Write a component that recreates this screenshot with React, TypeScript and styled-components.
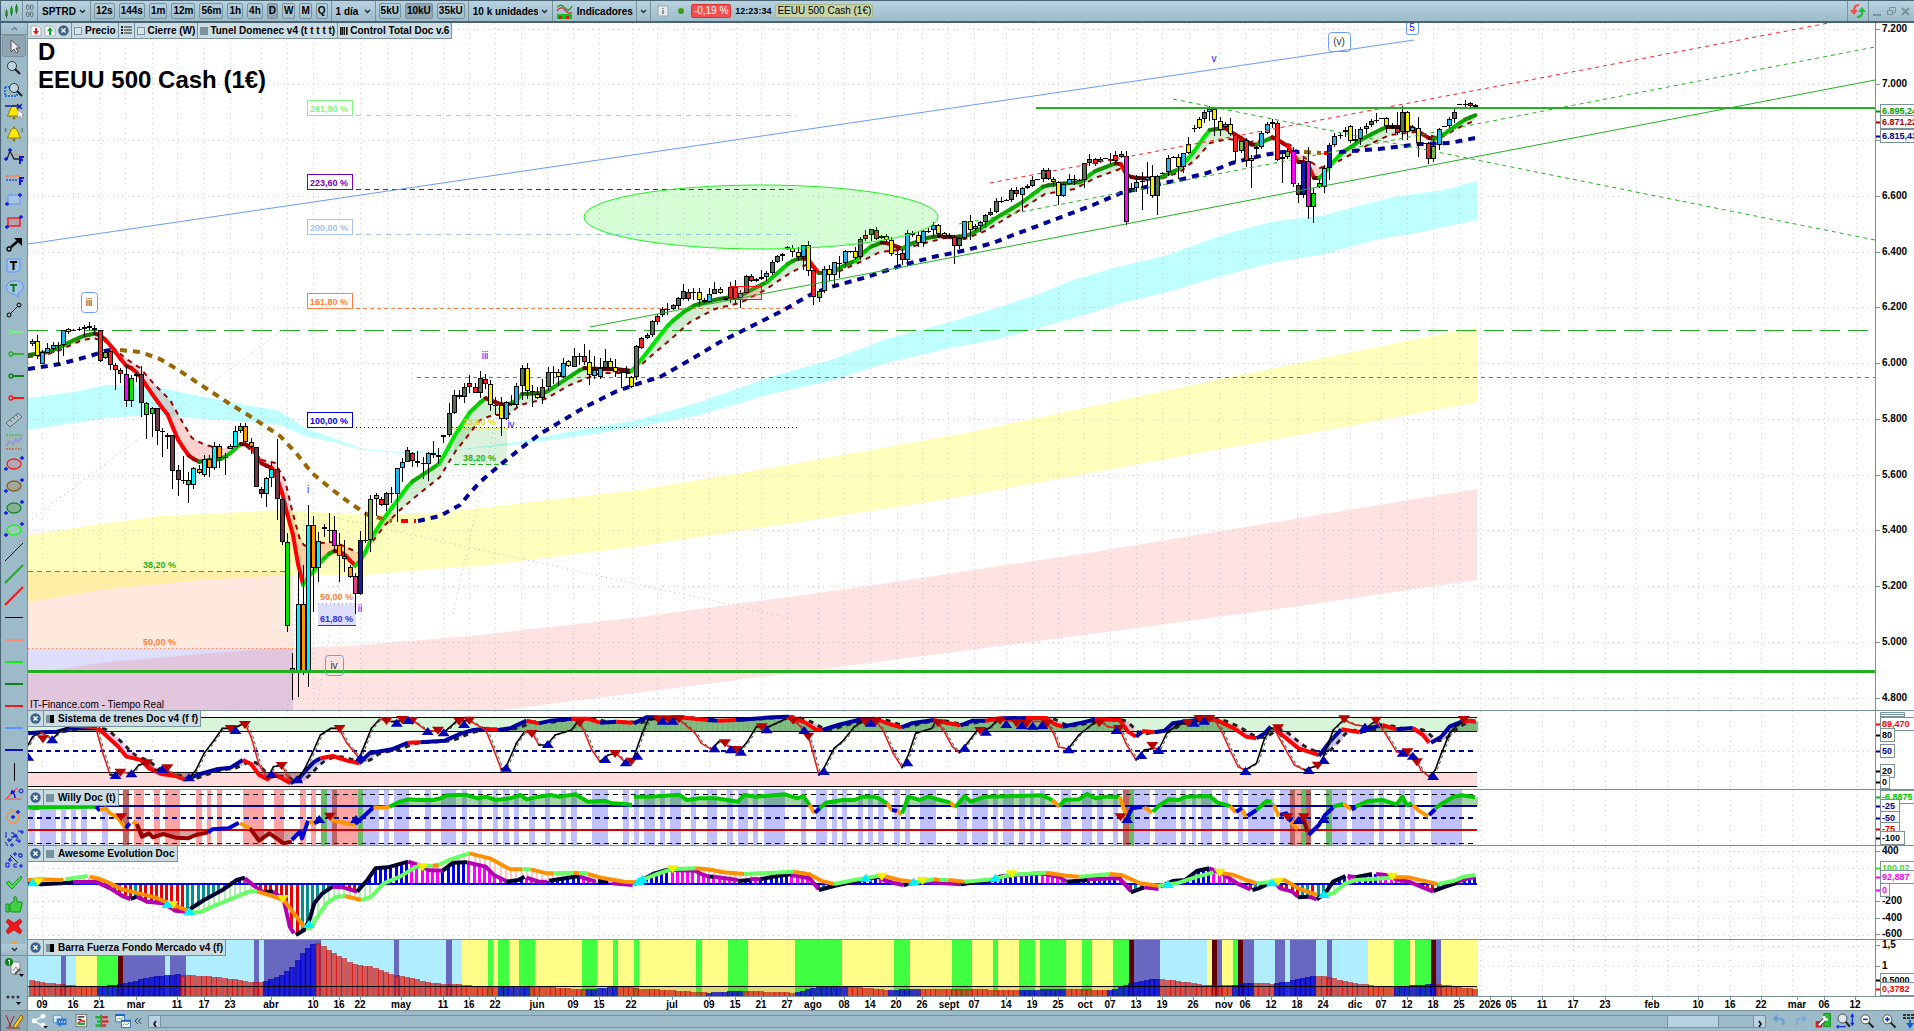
import React from 'react';
import styled, { createGlobalStyle } from 'styled-components';

/* ---------- palette ---------- */
const C = {
  edge: '#4a6373',
  line: '#7a929c',
  bar: '#9cbac8',
  barLight: '#b8d2e0',
  tab: '#cbdce3',
  up: '#22b022',
};

const FONT = '"Liberation Sans", Arial, sans-serif';

const GlobalStyle = createGlobalStyle`
  * { box-sizing: border-box; }
  body { margin: 0; background: #fff; font-family: ${FONT}; font-size: 10px; color: #000; overflow: hidden; }
  button, select, input { font-family: inherit; color: inherit; margin: 0; }
`;

/* ---------- shell ---------- */
const Page = styled.div`
  display: flex;
  flex-direction: column;
  min-height: 100vh;
`;
const TopBar = styled.header`
  display: flex;
  align-items: stretch;
  height: 23px;
  background: linear-gradient(${C.barLight}, #9dbbc9);
  border-top: 1px solid ${C.edge};
  border-bottom: 2px solid ${C.edge};
  border-left: 1px solid ${C.edge};
  font-weight: 700;
`;
const Group = styled.div<{ $pad?: number; $gap?: number; $open?: boolean }>`
  display: flex;
  align-items: center;
  gap: ${(p) => p.$gap ?? 4}px;
  padding: 0 ${(p) => p.$pad ?? 4}px;
  border-right: ${(p) => (p.$open ? '0' : `1px solid ${C.line}`)};
  white-space: nowrap;
`;
const Spacer = styled.div`
  flex: 1;
`;
const Frame = styled.button<{ $on?: boolean }>`
  height: 16px;
  padding: 0 1px;
  border: 1px solid ${C.line};
  border-radius: 2px;
  background: ${(p) => (p.$on ? '#8fa6b2' : 'transparent')};
  font-size: 10px;
  font-weight: 700;
  line-height: 14px;
`;
const Plain = styled.button`
  display: inline-flex;
  align-items: center;
  justify-content: center;
  gap: 4px;
  padding: 0;
  border: 0;
  background: none;
  font-size: 10px;
  font-weight: 700;
`;
const Picker = styled.select<{ $w: number }>`
  width: ${(p) => p.$w}px;
  padding: 0;
  border: 0;
  appearance: none;
  background: none;
  font-size: 10px;
  font-weight: 700;
`;
const Change = styled.span`
  padding: 0 2px;
  border: 1px solid #e03030;
  border-radius: 2px;
  background: #f25050;
  color: #fff;
  font-weight: 400;
  line-height: 12px;
`;
const Clock = styled.span`
  font-size: 9px;
`;
const Market = styled.span`
  padding: 0 1px;
  border: 1px solid #a9b884;
  border-radius: 3px;
  background: #c6d4a8;
  font-weight: 400;
  line-height: 12px;
`;

const Body = styled.div`
  display: flex;
  flex: 1;
`;
const Side = styled.nav`
  display: flex;
  flex-direction: column;
  width: 28px;
  background: ${C.bar};
  border-left: 1px solid ${C.edge};
  border-right: 1px solid ${C.line};
`;
const Fold = styled.button`
  display: flex;
  align-items: center;
  justify-content: center;
  height: 12px;
  padding: 0;
  border: 0;
  border-bottom: 1px solid ${C.line};
  background: linear-gradient(#aec9d6, ${C.bar});
`;
const Tool = styled.button<{ $on?: boolean }>`
  display: flex;
  align-items: center;
  justify-content: center;
  height: 22px;
  margin: 0 1px;
  padding: 0;
  border: 1px solid ${(p) => (p.$on ? C.line : 'transparent')};
  border-radius: 3px;
  background: ${(p) => (p.$on ? '#8fa6b2' : 'none')};
`;
const Peek = styled.div`
  height: 7px;
  overflow: hidden;
  text-align: center;
`;
const Charts = styled.main`
  display: flex;
  flex-direction: column;
  flex: 1;
  min-width: 0;
`;
const PanelRow = styled.section`
  position: relative;
  display: flex;
  border-bottom: 1px solid ${C.line};
`;
const Plot = styled.svg`
  display: block;
  flex: 1;
  min-width: 0;
  overflow: hidden;
`;
const Axis = styled.svg`
  display: block;
  flex: none;
  width: 39px;
  border-left: 1px solid ${C.line};
  background: #fff;
`;
const Tabs = styled.div`
  position: absolute;
  top: 0;
  left: 0;
  display: flex;
  height: 16px;
  border-right: 1px solid ${C.line};
  border-bottom: 1px solid ${C.line};
  background: ${C.tab};
  font-weight: 700;
`;
const Tab = styled.div<{ $tight?: boolean }>`
  display: flex;
  align-items: center;
  gap: ${(p) => (p.$tight ? 2 : 4)}px;
  padding: 0 2px;
  white-space: nowrap;
  & + & { border-left: 1px solid ${C.line}; }
`;
const TickLabel = styled.label`
  display: flex;
  align-items: center;
  gap: 3px;
`;
const Tick = styled.input`
  width: 8px;
  height: 8px;
  border: 1px solid ${C.line};
  appearance: none;
  background: #dbe6ea;
`;
const Heading = styled.h1`
  position: absolute;
  top: 15px;
  left: 10px;
  margin: 0;
  font-size: 24px;
  line-height: 28px;
  font-weight: 700;
`;
const Bottom = styled.footer`
  display: flex;
  align-items: stretch;
  height: 21px;
  background: ${C.bar};
  border-top: 1px solid ${C.line};
  border-left: 1px solid ${C.edge};
`;
const Shelf = styled.div<{ $dark?: boolean }>`
  display: flex;
  align-items: center;
  justify-content: space-around;
  width: ${(p) => (p.$dark ? 27 : 106)}px;
  background: ${(p) => (p.$dark ? '#8fa6b2' : 'none')};
  border-right: ${(p) => (p.$dark ? `1px solid ${C.line}` : '0')};
`;
const Scroll = styled.div`
  display: flex;
  flex: 1;
  align-self: center;
  height: 13px;
  margin: 0 4px 0 6px;
  border: 1px solid ${C.line};
`;
const Step = styled.button`
  width: 11px;
  padding: 0;
  border: 0;
  background: ${C.barLight};
  outline: 1px solid ${C.line};
`;
const Track = styled.div`
  display: flex;
  flex: 1;
  justify-content: flex-end;
  padding-right: 35px;
`;
const Thumb = styled.div`
  width: 52px;
  background: ${C.barLight};
  border: solid ${C.line};
  border-width: 0 1px;
`;
const ZoomShelf = styled.div`
  display: flex;
  align-items: center;
  gap: 4px;
`;

/* ---------- geometry helpers ---------- */
type P = [number, number];
const parse = (s: string): P[] =>
  s.trim().split(/\s+/).map((q) => q.split(',').map(Number) as P);
const join = (p: P[]) => p.map((q) => q.join(',')).join(' ');
const at = (p: P[], x: number) => {
  if (x <= p[0][0]) return p[0][1];
  for (let i = 1; i < p.length; i++) {
    if (x <= p[i][0]) {
      const [x0, y0] = p[i - 1];
      const [x1, y1] = p[i];
      return x1 === x0 ? y1 : y0 + ((y1 - y0) * (x - x0)) / (x1 - x0);
    }
  }
  return p[p.length - 1][1];
};
/* Indicator traces come in three time blocks, held at plotting resolution. */
const BLOCKS = [0, 634, 1274];
const bx = (b: number, x: number) => BLOCKS[b] + x / 2.45;
const by = (y: number) => 700 + y / 3;
const scale = (b: number, s: string): P[] => parse(s).map(([x, y]) => [bx(b, x), by(y)]);

const PITCH = 5.21;
const barX = (i: number) => 32.3 + i * PITCH;
const LAST = 277;
const END = 1477;

/* ---------- candles: high top bottom low colour, in thirds of a pixel ---------- */
const LEG_A = `266 273 281 289 b|256 274 319 326 y|300 307 341 341 b|280 294 308 310 b|277 286 296 308 b|275 285 285 347 x|241 241 286 318 b|234 238 246 252 y|238 240 240 242 x|232 237 237 242 x|226 230 234 262 b|216 229 235 240 b|226 235 240 256 y|241 241 332 335 r|302 305 323 327 v|300 303 346 361 r|340 345 361 420 r|355 361 373 400 r|345 373 452 470 p|375 385 452 470 l|365 372 378 395 r|348 373 460 500 m|455 459 494 568 l|470 475 493 562 l|475 475 544 585 m|535 542 542 622 x|550 556 562 598 m|556 556 662 718 m|645 660 691 738 m|618 690 690 702 x|665 690 706 758 l|650 655 706 718 c|645 658 670 672 o|615 627 674 680 c|615 628 655 680 o|576 589 655 660 c|582 589 623 655 o|608 620 620 676 x|582 589 598 598 c|528 544 590 590 c|520 529 544 548 l|518 529 577 580 o|565 577 591 612 o|592 592 712 712 m|712 717 733 745 m|680 685 733 770 c|640 658 685 710 c|568 657 748 810 m|745 748 875 885 m|850 875 1127 1145 l|1210 1255 1263 1350 l|965 1063 1263 1340 c|945 1063 1263 1275 o|765 826 1263 1310 c|797 826 953 1085 o|845 874 953 995 c|822 832 838 862 n|790 840 840 880 x|797 841 887 900 p|848 886 917 995 o|870 917 928 965 o|945 952 980 985 o|968 979 1031 1093 k|843 871 1031 1035 n|785 871 871 880 x|735 748 871 905 v|728 736 748 798 v|740 748 766 768 r|725 728 766 782 g|710 729 729 760 x|655 655 733 815 b|625 637 655 695 b|592 601 637 637 g|605 610 634 650 r|602 634 640 650 r|620 640 640 688 x|605 610 643 694 b|574 610 616 625 r|595 616 622 642 r|556 556 562 580 g|460 490 556 562 g|420 436 490 492 g|420 436 442 448 r|400 412 442 458 g|375 400 412 430 r|400 410 430 430 r|364 385 430 445 g|373 388 402 418 r|390 402 466 482 y|442 466 466 495 x|440 466 508 557 y|454 457 506 510 b|436 458 466 468 y|400 409 466 470 b|345 355 409 450 g|340 355 424 448 y|405 423 423 472 x|410 433 445 447 y|388 412 445 462 g|352 367 412 422 g|348 366 366 402 x|358 367 382 408 y|325 340 382 384 b|330 334 349 352 y|295 317 350 350 g|310 317 317 345 x|282 319 337 345 r|300 337 376 404 y|318 361 377 386 b|325 355 380 386 b|298 332 355 360 g|325 332 353 362 y|328 352 367 380 y|355 366 366 415 x|347 365 365 385 x|378 380 412 415 y|284 289 382 390 g|262 265 293 298 r|248 256 265 268 g|210 214 256 262 g|192 199 215 225 r|172 178 196 200 g|160 176 176 195 x|162 166 176 180 g|140 145 167 178 g|102 124 146 150 g|118 125 148 152 r|115 127 127 150 x|115 127 150 170 y|145 149 157 160 y|115 133 157 160 b|96 118 133 133 g|110 118 130 132 y|140 145 151 154 g|95 110 145 160 g|90 110 147 158 r|120 130 143 175 b|76 79 130 130 g|72 79 94 97 r|84 88 94 97 g|60 82 88 90 r|64 70 82 92 b|30 37 70 75 g|15 19 37 40 g|8 13 19 34 g`;
const LEG_B = `287 290 295 300 g|285 293 307 320 y|290 307 322 332 y|286 286 322 360 b|274 286 364 377 y|360 361 442 465 r|418 422 445 457 v|348 358 422 430 b|345 358 376 393 y|335 337 376 410 b|318 338 338 385 x|300 304 340 355 b|302 304 304 308 x|290 304 323 330 y|262 268 322 330 g|240 256 268 272 r|236 238 256 272 g|232 239 268 270 r|254 258 265 268 g|252 257 270 275 y|260 271 313 318 y|298 311 311 346 x|298 310 331 345 r|240 250 331 348 b|242 248 254 262 y|245 256 280 290 y|240 244 280 290 b|233 243 243 250 x|216 226 240 265 b|223 226 253 262 y|245 250 258 262 y|248 258 258 265 x|255 260 289 342 r|262 265 289 298 g|212 214 265 268 b|195 214 241 270 y|222 229 237 242 b|212 217 229 245 b|192 196 217 235 g|175 187 196 198 r|145 152 187 188 g|140 152 152 160 x|148 150 150 152 x|113 119 149 155 g|110 119 133 140 r`;
const LEG_C = `290 295 314 362 b|282 287 293 298 y|258 269 288 292 g|266 268 268 270 x|235 241 267 275 g|235 241 267 270 r|260 266 276 290 y|274 277 317 344 y|278 281 317 320 b|252 266 281 285 b|255 268 268 285 x|267 269 269 271 x|218 220 271 295 g|193 208 220 228 g|204 208 223 228 r|200 206 217 220 g|203 205 205 207 x|190 206 214 222 o|182 195 214 222 r|182 193 200 203 r|184 199 395 404 p|280 294 294 305 x|255 275 295 305 b|245 274 274 360 x|215 261 270 312 b|225 259 317 325 y|255 259 317 375 g|246 248 248 250 x|195 203 247 258 b|199 201 201 203 x|192 200 230 268 y|188 190 230 248 b|142 161 190 192 y|104 114 114 125 x|82 88 115 118 y|60 65 88 98 g|47 56 65 94 b|50 56 90 138 y|80 92 121 138 y|95 103 110 118 b|85 103 133 138 y|128 136 185 216 r|145 152 184 190 v|145 150 214 232 r|196 203 214 293 v|168 172 178 202 v|122 128 172 178 b|97 103 128 132 b|88 97 103 115 b|92 98 209 213 r|190 200 207 278 v|178 182 200 207 v|170 182 283 290 p|280 284 314 340 m|205 212 314 325 n|170 212 350 388 p|293 308 352 398 l|268 278 290 295 l|226 233 292 310 c|160 166 233 270 n|130 139 166 170 b|128 136 136 148 x|110 119 124 140 b|105 109 154 158 y|118 146 154 160 b|110 116 146 165 b|98 107 116 132 b|88 92 106 110 g|70 91 91 100 x|83 85 85 87 x|80 83 107 130 y|100 108 115 118 y|65 115 128 135 r|48 67 127 150 g|62 67 127 150 y|105 112 122 125 b|80 113 160 200 y|158 160 160 162 x|155 160 206 222 r|148 167 206 215 v|115 118 166 180 b|107 109 109 111 x|82 88 109 115 b|58 67 88 100 g|41 43 43 45 x|30 43 43 50 x|37 40 47 50 r|43 46 50 57 y`;
const FILL: Record<string, string> = {
  b: '#22b8ee', y: '#f4ee00', r: '#ff2222', g: '#536f55', m: '#6c3a46', l: '#00e800',
  c: '#00f0ff', o: '#ff9800', p: '#ff00ff', n: '#1a1aa8', v: '#7cba48', k: '#dc4490', x: '#000',
};
const candles = [
  ...LEG_A.split('|').map((s) => [250, s] as const),
  ...LEG_B.split('|').map((s) => [150, s] as const),
  ...LEG_C.split('|').map((s) => [90, s] as const),
].map(([base, s], i) => {
  const [h, t, b, l, c] = s.split(' ');
  const y = (v: string) => Math.round(base + Number(v) / 3);
  return { x: Math.floor(barX(i)), h: y(h), t: y(t), b: y(b), l: y(l), c };
});

const FAST = parse(`28,355 45,353 58,348 70,342 83,336 97,333 107,341 117,354 125,365 133,369 140,376 150,391 160,405 168,415 177,438 188,455 198,462 210,460 222,459 232,452 240,444 250,445 262,464 272,468 280,484 287,513 293,535 302,587 308,577 315,570 322,560 330,553 337,550 345,555 355,566 363,558 372,537 380,524 390,510 400,497 410,483 430,470 440,463 455,435 470,412 485,398 500,404 508,405 516,401 522,394 545,393 560,383 583,368 600,369 615,369 632,371 645,355 658,338 670,323 685,311 695,305 718,299 740,296 755,288 767,282 790,262 800,258 808,259 813,266 819,273 833,272 845,265 857,260 863,253 870,247 883,242 893,245 902,249 908,245 927,238 937,236 953,237 967,236 980,229 996,218 1021,203 1044,186 1057,184 1082,182 1093,172 1111,165 1120,162 1127,176 1136,178 1157,179 1179,169 1193,153 1209,130 1225,128 1236,135 1254,146 1273,137 1289,147 1298,162 1307,162 1314,178 1321,178 1332,163 1343,152 1364,138 1386,127 1411,127 1432,140 1443,135 1464,120 1476,115`);
const SLOW = parse(`28,357 45,355 60,350 80,341 93,338 107,342 125,358 140,368 155,385 170,400 180,418 192,438 203,444 213,447 222,449 235,446 245,445 262,460 275,463 285,480 292,510 300,540 304,545 310,548 320,543 335,542 350,549 360,553 370,545 385,525 400,510 420,493 440,477 455,452 470,433 480,420 493,415 508,415 520,405 545,399 570,385 600,373 632,373 650,357 670,340 690,322 715,309 740,303 765,290 790,273 808,264 820,273 833,274 860,262 880,252 900,250 925,243 945,238 965,239 985,231 1000,222 1020,210 1045,194 1075,189 1095,178 1120,169 1130,177 1155,181 1180,172 1195,160 1210,143 1228,139 1250,142 1273,139 1290,145 1305,158 1320,168 1335,163 1350,155 1370,144 1390,135 1415,132 1440,138 1460,127 1476,120`);
const LONG: [string, string][] = [
  ['#000099', '28,369 60,364 90,356 105,351 116,349'],
  ['#996600', '120,350 140,352 160,359 180,371 207,389 230,404 245,413 262,424 280,436 296,453 312,473 330,488 350,503 368,515 392,521'],
  ['#ff0000', '401,521 416,521'],
  ['#000099', '418,521 440,516 460,505 470,493 480,482 500,465 520,449 540,434 560,422 585,407 615,392 640,383 660,377 690,360 720,342 750,327 780,312 810,295 827,288 867,277 903,265 933,257 967,250 993,243 1013,235 1043,224 1093,205 1121,193 1150,186 1179,180 1207,173 1232,163 1264,155 1282,152 1302,152'],
  ['#996600', '1304,152 1321,153'],
  ['#ff0000', '1324,153 1334,153'],
  ['#000099', '1339,152 1379,149 1421,144 1450,143 1475,138'],
];
const band = (up: string, lo: string) => up + ' ' + lo.trim().split(' ').reverse().join(' ');
const CYAN = band(
  '28,398 73,392 107,385 150,386 190,394 225,401 280,411 305,428 333,438 363,449 400,452 440,451 470,448 520,441 587,428 637,420 700,402 770,377 830,360 890,338 950,322 996,308 1036,295 1073,280 1121,266 1164,256 1200,243 1225,234 1271,222 1325,215 1350,208 1393,197 1443,190 1477,181',
  '28,430 73,423 107,418 150,415 190,418 225,420 280,425 305,436 333,442 363,450 400,453 440,453 470,449 520,444 587,435 637,427 700,415 770,394 830,381 890,362 950,348 998,339 1036,329 1091,313 1121,303 1164,293 1218,277 1271,263 1325,254 1375,240 1421,232 1477,220');
const YELLOW = band(
  '28,535 100,524 160,516 220,513 280,510 333,513 367,515 433,513 480,508 637,490 770,468 970,432 1221,379 1411,340 1477,327',
  '28,602 100,590 200,580 290,575 367,575 433,569 480,566 640,546 883,509 970,495 1221,449 1350,426 1477,402');
const PINK = band(
  '28,674 100,663 200,654 280,648 350,646 480,635 640,617 854,588 1100,551 1300,518 1477,489',
  '28,720 440,718 502,710 583,700 854,665 1100,633 1300,606 1477,580');

const GRID_X = [42, 73, 100, 125, 152, 177, 204, 230, 261, 287, 313, 339, 360, 387, 412, 443, 469, 495, 521, 547, 573, 599, 632, 657, 683, 709, 736, 761, 787, 818, 844, 870, 897, 922, 948, 974, 1006, 1032, 1058, 1084, 1110, 1136, 1162, 1189, 1219, 1245, 1271, 1297, 1324, 1350, 1381, 1407, 1433, 1459, 1480, 1511, 1542, 1573, 1605, 1636, 1667, 1698, 1730, 1761, 1792, 1824, 1856];

const Grid = ({ top, h, ys }: { top: number; h: number; ys: number[] }) => (
  <g stroke="#d4d4d4" strokeDasharray="1 4" shapeRendering="crispEdges">
    {GRID_X.map((x) => <line key={x} x1={x} x2={x} y1={top} y2={top + h} />)}
    {ys.map((y) => <line key={y} x1={28} x2={1875} y1={y} y2={y} />)}
  </g>
);

const maColour = (slope: number) => {
  const t = Math.min(1, Math.abs(slope) / 1.1);
  return slope < 0
    ? `rgb(${Math.round(30 * (1 - t))},${Math.round(100 + 130 * t)},0)`
    : `rgb(${Math.round(85 + 170 * t)},0,0)`;
};

const MovingAverages = () => {
  const quads: React.ReactNode[] = [];
  const line: React.ReactNode[] = [];
  for (let i = 0; i <= LAST; i++) {
    const a = i === 0 ? 28 : barX(i - 1);
    const b = barX(i);
    const fa = at(FAST, a), fb = at(FAST, b), sa = at(SLOW, a), sb = at(SLOW, b);
    quads.push(
      <polygon key={i} points={`${a},${fa} ${b},${fb} ${b},${sb} ${a},${sa}`}
        fill={fa + fb < sa + sb ? 'rgba(30,160,30,.2)' : 'rgba(255,50,50,.22)'} />,
    );
    line.push(<line key={i} x1={a} y1={fa} x2={b} y2={fb} stroke={maColour((fb - fa) / (b - a))} />);
  }
  return (
    <g>
      {quads}
      <polyline points={join(SLOW)} fill="none" stroke="#990000" strokeWidth={2} strokeDasharray="5 5" />
      <g strokeWidth={4} strokeLinecap="round">{line}</g>
      {LONG.map(([c, p], i) => (
        <polyline key={i} points={p} fill="none" stroke={c} strokeWidth={4} strokeDasharray="7 6" />
      ))}
    </g>
  );
};

const FibLabel = ({ y, text, color, dash }: { y: number; text: string; color: string; dash: string }) => (
  <g>
    <rect x={307.5} y={y - 15.5} width={45} height={15} fill="#fff" stroke={color} />
    <text x={310} y={y - 4} fill={color} fontSize={9} fontWeight={700}>{text}</text>
    <line x1={356} x2={797} y1={y - 0.5} y2={y - 0.5} stroke={color} strokeDasharray={dash} />
  </g>
);

const PriceChart = () => (
  <Plot height={687} fontFamily={FONT} fontSize={10}>
    <g transform="translate(-28,-23)">
      <Grid top={23} h={688} ys={[29, 84, 140, 196, 252, 307, 363, 419, 475, 530, 586, 642, 698]} />
      <rect x={28} y={571} width={265} height={77} fill="#ffe9df" />
      <rect x={28} y={648} width={265} height={63} fill="#dedefa" />
      <polygon points={CYAN} fill="rgba(0,255,255,.25)" />
      <polygon points={YELLOW} fill="rgba(255,255,0,.26)" />
      <polygon points={PINK} fill="rgba(255,60,60,.14)" />
      <g stroke="#bcbcbc" strokeDasharray="1 4" strokeWidth={1}>
        <line x1={28} y1={522} x2={292} y2={323} />
        <line x1={313} y1={513} x2={795} y2={619} />
        <line x1={453} y1={614} x2={507} y2={370} />
        <line x1={318} y1={700} x2={350} y2={512} />
        <line x1={288} y1={705} x2={305} y2={510} />
      </g>
      <line x1={28} y1={571.5} x2={288} y2={571.5} stroke={C.up} strokeDasharray="5 4" />
      <line x1={28} y1={648.5} x2={293} y2={648.5} stroke="#ff8040" strokeDasharray="1 3" />
      <rect x={454} y={428} width={53} height={36} fill="rgba(30,170,30,.15)" />
      <line x1={454} x2={507} y1={428} y2={428} stroke="#e8e800" strokeWidth={1} strokeDasharray="5 3" />
      <line x1={454} x2={507} y1={464.5} y2={464.5} stroke={C.up} strokeDasharray="5 3" />
      <rect x={318} y={604} width={38} height={21} fill="#dedefa" />
      <line x1={318} x2={356} y1={603.5} y2={603.5} stroke="#ff8040" strokeDasharray="1 3" />
      <line x1={318} x2={356} y1={625.5} y2={625.5} stroke="#3030e0" />
      <FibLabel y={116} text="261,80 %" color="#7cf87c" dash="5 5" />
      <FibLabel y={190} text="223,60 %" color="#7a00b8" dash="5 4" />
      <FibLabel y={235} text="200,00 %" color="#a8bff8" dash="5 5" />
      <FibLabel y={309} text="161,80 %" color="#ff8040" dash="4 3" />
      <FibLabel y={428} text="100,00 %" color="#0000e0" dash="1 3" />

      <line x1={28} x2={1871} y1={330.5} y2={330.5} stroke={C.up} strokeDasharray="20 8" />
      <line x1={417} x2={1875} y1={377.5} y2={377.5} stroke={C.up} strokeDasharray="4 4" />
      <MovingAverages />
      <g>
        {candles.map((k, i) => (
          <g key={i} shapeRendering="crispEdges">
            <rect x={k.x} y={k.h} width={1} height={Math.max(1, k.l - k.h)} fill="#000" />
            {k.c === 'x'
              ? <rect x={k.x - 2} y={k.t} width={5} height={1} fill="#000" />
              : <rect x={k.x - 1.5} y={k.t + 0.5} width={4} height={Math.max(1, k.b - k.t - 1)} fill={FILL[k.c]} stroke="#000" />}
          </g>
        ))}
      </g>
      <ellipse cx={761} cy={217} rx={177} ry={32} fill="rgba(0,255,0,.16)" stroke="#20f020" />
      <line x1={28} y1={244} x2={1414} y2={40} stroke="#6a9aff" />
      <line x1={990} y1={183} x2={1834} y2={22} stroke="#ff2020" strokeDasharray="4 4" />
      <g stroke={C.up}>
        <line x1={590} y1={327} x2={1875} y2={80} />
        <line x1={959} y1={224} x2={1875} y2={47} strokeDasharray="4 4" />
        <line x1={1173} y1={99} x2={1875} y2={240} strokeDasharray="4 4" />
        <line x1={1036} y1={108} x2={1875} y2={108} strokeWidth={2} />
        <line x1={28} y1={671.5} x2={1875} y2={671.5} strokeWidth={3} />
      </g>
      <rect x={730.5} y={286.5} width={31} height={13} fill="rgba(255,60,60,.2)" stroke="#ff1010" />

      <g fontSize={9} fontWeight={700}>
        <text x={143} y={568} fill={C.up}>38,20 %</text>
        <text x={143} y={645} fill="#ff8040">50,00 %</text>
        <text x={320} y={600} fill="#ff8040">50,00 %</text>
        <text x={320} y={622} fill="#3030e0">61,80 %</text>
        <text x={463} y={425} fill="#d8d820">23,60 %</text>
        <text x={463} y={461} fill={C.up}>38,20 %</text>
      </g>
      <g fill="none" stroke="#6a9aff" strokeWidth={1}>
        <rect x={81.5} y={292.5} width={16} height={20} rx={3} fill="#fff" />
        <rect x={325.5} y={655.5} width={18} height={20} rx={3} />
        <rect x={1328.5} y={32.5} width={22} height={19} rx={3} />
        <rect x={1406.5} y={20.5} width={12} height={14} rx={1} />
      </g>
      <g textAnchor="middle" fill="#2020ff">
        <text x={89} y={306} fill="#333">iii</text>
        <text x={334} y={669} fill="#333">iv</text>
        <text x={308} y={493}>i</text>
        <text x={360} y={612}>ii</text>
        <text x={485} y={359}>iii</text>
        <text x={511} y={428}>iv</text>
        <text x={1214} y={62}>v</text>
        <text x={1339} y={45} fill="#333">(v)</text>
        <text x={1412} y={31}>5</text>
      </g>
      <text x={30} y={708}>IT-Finance.com - Tiempo Real</text>
    </g>
  </Plot>
);

/* ---------- "Sistema de trenes" ---------- */
type Seg = [number, string, string];
const TRAIN: Seg[] = [
  [0, 'b', '69,100 100,97 140,95 170,85 235,85'],
  [0, 'r', '240,84 270,118 290,140 310,170 345,180 365,205 395,222 430,228 455,240'],
  [0, 'b', '455,238 490,222 530,208 565,203 595,180'],
  [0, 'r', '595,180 615,192 635,225 655,238 670,222 690,235 712,250'],
  [0, 'b', '712,250 735,232 750,210 770,185 785,175'],
  [0, 'r', '785,175 815,168 850,182 880,190'],
  [0, 'b', '880,190 905,160 960,148 1000,128'],
  [0, 'r', '1000,128 1030,127'],
  [0, 'b', '1030,127 1090,122 1130,100 1160,90 1190,86'],
  [0, 'r', '1190,86 1220,90'],
  [0, 'b', '1220,90 1250,85 1290,62'],
  [0, 'r', '1290,62 1320,70'],
  [0, 'b', '1320,70 1350,62 1400,56'],
  [0, 'r', '1400,56 1440,56 1470,68'],
  [0, 'b', '1470,68 1510,65'],
  [0, 'r', '1510,65 1550,68'],
  [1, 'b', '0,70 30,52 60,52'],
  [1, 'r', '60,52 110,52 180,60'],
  [1, 'b', '180,60 205,62'],
  [1, 'r', '205,62 250,60'],
  [1, 'b', '250,60 340,52 380,50'],
  [1, 'r', '380,50 420,68 445,88 462,90'],
  [1, 'b', '462,90 500,75 550,60 590,56'],
  [1, 'r', '590,56 625,72 655,82'],
  [1, 'b', '655,82 680,70 735,60'],
  [1, 'r', '735,60 770,70 800,76'],
  [1, 'b', '800,76 830,62 860,62'],
  [1, 'r', '860,62 900,55'],
  [1, 'b', '900,55 960,54'],
  [1, 'r', '960,54 1010,54 1030,72 1050,80'],
  [1, 'b', '1050,80 1090,70 1130,58'],
  [1, 'r', '1130,58 1190,60 1210,95 1230,110'],
  [1, 'b', '1230,110 1245,95'],
  [1, 'r', '1245,93 1275,97'],
  [1, 'b', '1275,97 1300,92 1320,70 1400,56'],
  [1, 'r', '1400,56 1430,62 1470,85 1500,110 1525,115'],
  [1, 'b', '1525,115 1545,100 1560,80'],
  [2, 'r', '0,85 30,115 60,145 110,165'],
  [2, 'b', '110,168 140,120 165,88'],
  [2, 'r', '165,88 210,97'],
  [2, 'b', '210,97 240,82 265,75'],
  [2, 'r', '265,75 300,88'],
  [2, 'b', '300,88 340,84'],
  [2, 'r', '340,84 365,105 380,128'],
  [2, 'b', '385,128 410,110 430,80 460,65'],
  [2, 'r', '460,65 480,62 493,64'],
];
const OSC: P[] = [
  ...scale(0, '69,135 80,110 100,97 128,118 150,90 170,80 235,85 252,160 270,225 285,225 295,215 322,222 340,195 360,188 380,210 400,205 430,225 460,240 480,210 500,160 525,120 545,85 570,85 600,70 615,110 635,195 655,235 670,200 690,195 705,230 715,245 730,235 745,210 765,160 785,105 810,85 830,85 850,130 880,175 895,130 910,85 930,58 960,65 1010,60 1045,92 1090,95 1120,62 1150,62 1190,90 1210,150 1228,208 1240,200 1265,130 1285,95 1305,100 1320,135 1340,135 1360,105 1400,90 1415,65 1430,90 1450,150 1470,185 1490,165 1510,160 1530,185 1548,185'),
  ...scale(1, '0,170 20,100 35,58 110,58 150,100 165,130 190,148 210,122 245,150 260,150 275,130 300,80 330,80 375,55 400,70 415,90 430,120 440,165 453,225 465,205 490,145 510,125 540,80 560,65 590,62 610,90 635,160 657,203 672,165 690,100 730,85 740,60 760,95 780,140 797,158 810,140 840,92 870,85 890,62 1010,65 1030,105 1040,140 1063,148 1090,105 1120,75 1140,62 1160,80 1190,85 1205,130 1230,180 1250,150 1275,145 1285,150 1305,100 1330,75 1420,55 1440,95 1460,150 1480,200 1497,210 1525,190 1545,115 1560,85'),
  ...scale(2, '0,85 20,130 50,195 75,210 110,195 125,160 145,90 170,60 200,75 230,80 250,62 270,95 300,155 345,170 360,210 380,230 395,210 410,160 430,100 450,75 470,60 493,70'),
];
const DOWN: [number, string][] = [
  [0, '105,118 295,218 360,190 410,205 565,87 600,75 690,198 832,87 947,63 985,60 1010,63 1073,92 1125,65 1150,62 1303,102 1420,70 1507,162 1547,185'],
  [1, '60,60 85,60 110,58 223,130 250,150 313,82 390,62 427,110 567,67 592,65 745,70 848,93 897,62 937,70 962,72 1012,72 1140,70 1188,87 1270,138 1357,70 1385,57 1410,57'],
  [2, '10,85 107,197 172,58 250,62 327,157 350,187 465,60'],
];
const UP: [number, string][] = [
  [0, '128,118 69,170 283,225 322,220 397,207 463,232 577,90 665,222 728,238 883,172 972,68 1000,60 1048,93 1087,97 1137,72 1240,203 1342,132 1483,177 1533,187'],
  [1, '8,167 70,62 95,62 197,145 237,148 262,155 325,88 417,90 465,213 580,68 670,187 810,143 862,95 912,72 950,75 977,77 1000,75 1065,148 1182,90 1243,165 1285,150 1372,68 1397,62 1498,213'],
  [2, '85,210 122,180 223,80 315,158 340,167 390,228'],
];
const Marks = ({ list, up, color, w = 5 }: { list: [number, string][]; up?: boolean; color: string; w?: number }) => (
  <g fill={color}>
    {list.flatMap(([b, s]) => scale(b, s)).map(([x, y], i) => {
      const d = up ? 4 : -4;
      return <polygon key={i} points={`${x - w},${y + d} ${x + w},${y + d} ${x},${y - d}`} />;
    })}
  </g>
);
const trainLine: P[] = TRAIN.flatMap(([b, , s]) => scale(b, s));
const signal: P[] = Array.from({ length: LAST + 1 }, (_, i) => {
  const x = barX(i);
  return [x, (at(trainLine, x - 4) + at(trainLine, x - 8) + at(trainLine, x - 13)) / 3] as P;
});

const TrainChart = () => (
  <Plot height={78}>
    <g transform="translate(-28,-711)">
      <Grid top={711} h={78} ys={[751]} />
      <rect x={28} y={717} width={END - 28} height={14} fill="#d9f5d9" />
      <rect x={28} y={772} width={END - 28} height={14} fill="#ffdcdc" />
      {Array.from({ length: LAST + 1 }, (_, i) => {
        const x = barX(i);
        const a = at(trainLine, x);
        const s = signal[i][1];
        return (
          <g key={i}>
            {a < 731 && <rect x={x - PITCH / 2} y={a} width={PITCH + 0.3} height={731 - a} fill="rgba(0,100,0,.4)" />}
            {a > 772 && <rect x={x - PITCH / 2} y={772} width={PITCH + 0.3} height={a - 772} fill="rgba(100,0,0,.35)" />}
            <rect x={x - PITCH / 2} y={Math.min(a, s)} width={PITCH + 0.3} height={Math.abs(a - s)} fill={a < s ? 'rgba(40,40,200,.25)' : 'rgba(220,40,180,.25)'} />
          </g>
        );
      })}
      <g stroke="#000">
        {[717.5, 731.5, 772.5, 786.5].map((y) => <line key={y} x1={28} x2={END} y1={y} y2={y} />)}
      </g>
      <line x1={28} x2={END} y1={751} y2={751} stroke="#000099" strokeWidth={2} strokeDasharray="5 4" />
      <polyline points={join(signal)} fill="none" stroke="#222" strokeWidth={3} strokeDasharray="5 5" />
      {TRAIN.map(([b, c, s], i) => (
        <polyline key={i} points={join(scale(b, s))} fill="none" stroke={c === 'b' ? '#0000a0' : '#ff0000'} strokeWidth={4} strokeLinejoin="round" />
      ))}
      <polyline points={join(OSC.map(([x, y]) => [x + 2, y] as P))} fill="none" stroke="#335533" strokeDasharray="3 3" />
      {OSC.slice(1).map(([x, y], i) => (
        <line key={i} x1={OSC[i][0]} y1={OSC[i][1]} x2={x} y2={y} stroke={y > OSC[i][1] ? '#e02020' : '#000'} strokeWidth={1.600} strokeLinecap="round" />
      ))}
      <Marks list={DOWN} color="#b80000" w={6} />
      <Marks list={UP} up color="#0000b8" w={6} />
    </g>
  </Plot>
);

/* ---------- "Willy" ---------- */
const WILLY_BARS: [number, string, string][] = [
  [0, 'l', '72,85 98,136 150,161 175,187 199,212 250,265 801,813 889,928 941,952 965,1003 1041,1055 1080,1118 1132,1144 1170,1182 1208,1220 1233,1247 1259,1271 1297,1311 1335,1348 1374,1387 1400,1413 1450,1490 1527,1540'],
  [0, 'p', '328,352 378,392 404,442 480,495 507,518 532,544 595,647 671,697 736,749 762,774 826,877'],
  [0, 'm', '301,315 813,826'],
  [0, 'g', '786,801 877,889'],
  [1, 'l', '0,12 24,51 64,76 89,115 140,152 179,203 229,243 255,279 292,305 318,370 408,421 446,473 485,497 510,522 549,561 574,586 598,612 638,651 664,676 701,740 792,816 828,868 880,892 904,930 944,957 969,981 995,1007 1046,1071 1098,1122 1134,1148 1174,1186 1225,1264 1277,1328 1340,1352 1366,1378 1390,1416 1441,1455 1480,1492 1504,1568'],
  [1, 'm', '1198,1213'],
  [1, 'g', '1213,1225'],
  [2, 'l', '15,39 142,179 191,245 257,269 306,321 333,345 385,461'],
  [2, 'p', '51,66'],
  [2, 'm', '39,51 78,91'],
  [2, 'g', '66,78 127,142'],
];
const WILLY: Seg[] = [
  [0, 'g', '69,322 90,325 100,322 235,320'],
  [0, 'b', '235,320 245,332'],
  [0, 'o', '245,330 258,325 270,340 290,355 308,385'],
  [0, 'b', '308,385 318,370'],
  [0, 'o', '325,365 335,372'],
  [0, 'd', '335,372 348,410 365,400 375,412 400,402 430,413 460,415 480,405 510,397'],
  [0, 'b', '510,397 520,388 560,385 585,368'],
  [0, 'o', '588,370 612,385'],
  [0, 'd', '612,385 635,422 660,400 695,430 715,425'],
  [0, 'b', '715,420 735,395 740,415 755,362'],
  [0, 'o', '758,365 770,372'],
  [0, 'b', '770,370 783,362'],
  [0, 'o', '810,360 870,375'],
  [0, 'b', '870,372 890,350 915,322'],
  [0, 'o', '915,322 935,323 955,320'],
  [0, 'g', '955,320 980,305 1000,298 1030,300 1060,300 1080,295 1095,286 1140,284 1170,295 1190,290 1215,300 1250,295 1275,285 1290,298 1320,290 1350,285 1370,290 1410,283 1440,305 1480,302 1500,310 1530,312 1548,315'],
  [1, 'g', '0,290 40,290 110,284 130,300 160,295 200,295 230,300 255,305 270,285 300,290 370,283 400,295 415,288 430,315'],
  [1, 'o', '430,315 443,340'],
  [1, 'b', '443,338 455,325'],
  [1, 'g', '455,325 470,308 510,300 540,300 560,290 585,290 600,295 620,310'],
  [1, 'o', '620,310 632,330'],
  [1, 'b', '632,330 645,333'],
  [1, 'o', '645,333 657,343'],
  [1, 'g', '657,340 672,290 700,300 720,290 750,300 775,308'],
  [1, 'o', '775,308 787,322'],
  [1, 'g', '787,322 810,288 825,305 860,290 1000,286 1025,300'],
  [1, 'o', '1025,300 1043,320'],
  [1, 'g', '1043,318 1055,300 1090,298 1110,282 1130,295 1155,290 1190,290'],
  [1, 'o', '1190,290 1208,355'],
  [1, 'b', '1210,350 1220,325 1245,320'],
  [1, 'o', '1250,322 1270,338'],
  [1, 'g', '1272,335 1285,318 1310,298 1335,300 1350,290 1410,288 1430,308 1460,318'],
  [1, 'o', '1460,318 1475,338'],
  [1, 'b', '1475,335 1490,325'],
  [1, 'o', '1490,330 1500,350'],
  [1, 'b', '1503,348 1525,330'],
  [1, 'g', '1525,330 1550,303 1562,305'],
  [2, 'o', '0,315 12,350'],
  [2, 'b', '15,345 30,340 42,365'],
  [2, 'o', '42,365 58,388'],
  [2, 'd', '70,350 82,395'],
  [2, 'b', '85,405 110,375 125,345 145,322'],
  [2, 'g', '145,320 170,312'],
  [2, 'o', '170,312 190,328'],
  [2, 'b', '190,328 200,322'],
  [2, 'g', '200,320 230,303 265,300 300,313 315,290 325,315 338,310'],
  [2, 'o', '340,315 355,332 378,350'],
  [2, 'b', '380,345 395,328'],
  [2, 'g', '395,325 410,312 440,290 460,286 493,292'],
];
const WFILL: Record<string, string> = { l: '#c0c0fa', p: '#fca4a4', m: '#bc6464', g: '#68bc68' };
const WLINE: Record<string, string> = { g: '#00c800', b: '#0000d8', o: '#ff9800', d: '#990000' };
const willyLine = WILLY.flatMap(([b, , s]) => scale(b, s));
const WillyChart = () => (
  <Plot height={55}>
    <g transform="translate(-28,-790)">
      <Grid top={790} h={55} ys={[]} />
      {WILLY_BARS.flatMap(([b, c, s]) => parse(s).map(([x0, x1], i) => {
        const l = Math.round(bx(b, x0));
        return <rect key={`${b}${c}${i}`} x={l} y={790} width={Math.round(bx(b, x1)) - l} height={55} fill={WFILL[c]} />;
      }))}
      {Array.from({ length: LAST + 1 }, (_, i) => {
        const x = barX(i);
        const y = at(willyLine, x);
        if (y < 806) return <rect key={i} x={x - PITCH / 2} y={y} width={PITCH} height={806 - y} fill="rgba(0,130,0,.35)" />;
        if (y > 830) return <rect key={i} x={x - PITCH / 2} y={830} width={PITCH} height={y - 830} fill="rgba(130,0,0,.35)" />;
        return null;
      })}
      <g stroke="#000" strokeDasharray="5 4">
        <line x1={28} x2={END} y1={794.5} y2={794.5} />
        <line x1={28} x2={END} y1={843.5} y2={843.5} />
      </g>
      <line x1={28} x2={END} y1={818} y2={818} stroke="#000099" strokeWidth={2} strokeDasharray="5 4" />
      <line x1={28} x2={END} y1={806} y2={806} stroke="#000090" strokeWidth={2} />
      <line x1={28} x2={END} y1={830} y2={830} stroke="#d00000" strokeWidth={2} />
      {WILLY.map(([b, c, s], i) => (
        <polyline key={i} points={join(scale(b, s))} fill="none" stroke={WLINE[c]} strokeWidth={4} strokeLinejoin="round" />
      ))}
      <Marks list={[[0, '297,352 808,350'], [1, '1192,352'], [2, '33,352 73,352']]} color="#b80000" w={6} />
      <Marks list={[[0, '782,357 872,357'], [1, '1208,357'], [2, '60,360 122,357']]} up color="#0000b8" w={6} />
    </g>
  </Plot>
);

/* ---------- "Awesome Evolution" ---------- */
const AO: Seg[] = [
  [0, 'k', '69,550 100,553 150,550 180,546'],
  [0, 'm', '180,546 235,545 270,565 300,588 320,597'],
  [0, 'k', '320,597 335,590'],
  [0, 'm', '335,590 360,605 400,610 430,632 455,635'],
  [0, 'k', '462,630 500,600 545,570 580,540 600,533'],
  [0, 'm', '600,535 625,560 650,580'],
  [0, 'k', '650,575 670,575'],
  [0, 'm', '670,575 695,600 710,680 720,700'],
  [0, 'k', '725,705 745,690 758,660 770,610 790,580 815,560'],
  [0, 'm', '815,560 840,562 875,575'],
  [0, 'k', '875,575 900,540 920,505 950,502 1000,485'],
  [0, 'm', '1000,485 1025,495 1050,510 1085,512'],
  [0, 'k', '1085,512 1110,488 1145,487'],
  [0, 'm', '1145,487 1190,500 1210,525 1240,543'],
  [0, 'k', '1240,545 1270,540 1285,530'],
  [0, 'm', '1290,533 1320,545 1340,545'],
  [0, 'k', '1345,542 1420,528'],
  [0, 'm', '1420,530 1460,545'],
  [0, 'k', '1465,543 1490,545'],
  [0, 'm', '1500,550 1550,555'],
  [1, 'k', '0,553 20,540 50,520 85,508'],
  [1, 'm', '85,510 150,512 170,525 185,530'],
  [1, 'k', '185,530 195,530'],
  [1, 'm', '195,530 255,540'],
  [1, 'k', '255,543 285,540'],
  [1, 'm', '285,537 310,538'],
  [1, 'k', '310,538 350,528 385,523'],
  [1, 'm', '385,525 430,535 453,568'],
  [1, 'k', '453,570 490,558 520,550 600,530'],
  [1, 'm', '600,535 640,550 660,555'],
  [1, 'k', '660,555 700,545'],
  [1, 'm', '710,545 800,553'],
  [1, 'k', '800,553 880,540 900,528'],
  [1, 'm', '900,528 1000,520 1040,530 1060,545'],
  [1, 'k', '1060,545 1110,540'],
  [1, 'm', '1110,538 1190,535 1217,573'],
  [1, 'k', '1217,577 1250,562'],
  [1, 'm', '1250,562 1285,567'],
  [1, 'k', '1290,560 1320,543 1350,540 1380,512 1410,505'],
  [1, 'm', '1410,505 1440,520 1480,552 1510,568'],
  [1, 'k', '1515,570 1530,565 1560,548'],
  [2, 'm', '5,552 15,565 45,575 58,590'],
  [2, 'k', '58,592 85,590'],
  [2, 'm', '85,590 105,598'],
  [2, 'k', '105,598 125,580 145,545 175,528'],
  [2, 'm', '180,528 200,532'],
  [2, 'k', '200,532 240,522'],
  [2, 'm', '250,522 275,525 300,538 330,545 390,575'],
  [2, 'k', '390,573 420,560 450,548'],
  [2, 'm', '450,545 475,535 493,532'],
];
const SIG: Seg[] = [
  [0, 'o', '69,540 100,538 155,540'],
  [0, 'g', '160,538 215,528'],
  [0, 'o', '220,530 245,537 270,550 300,568 340,580 380,592 415,610 460,632'],
  [0, 'g', '465,637 490,637 520,620 550,605 580,590 610,575 630,573'],
  [0, 'o', '630,575 660,585 695,600 720,640 745,680'],
  [0, 'g', '750,684 760,685 775,655 800,610 825,590 845,588'],
  [0, 'o', '845,588 885,600'],
  [0, 'g', '885,600 910,590 940,550 980,530 1020,500 1060,497'],
  [0, 'o', '1060,497 1075,495'],
  [0, 'g', '1075,495 1100,480 1150,460'],
  [0, 'o', '1150,460 1200,475 1250,508 1280,508'],
  [0, 'g', '1280,508 1300,508'],
  [0, 'o', '1300,508 1340,520 1355,520'],
  [0, 'g', '1355,520 1405,518'],
  [0, 'o', '1405,518 1420,520'],
  [0, 'g', '1420,518 1440,520'],
  [0, 'o', '1440,522 1480,535 1530,545 1553,547'],
  [1, 'o', '0,547 10,545'],
  [1, 'g', '10,545 50,525 90,508 150,505'],
  [1, 'o', '150,505 180,508 220,517 270,522'],
  [1, 'g', '270,522 390,515'],
  [1, 'o', '390,515 430,523 460,543 490,552'],
  [1, 'g', '490,552 540,540 600,527'],
  [1, 'o', '610,527 650,540 690,547'],
  [1, 'g', '690,547 735,538'],
  [1, 'o', '735,538 750,540'],
  [1, 'g', '750,540 770,540'],
  [1, 'o', '770,540 810,545'],
  [1, 'g', '810,545 880,538 920,525 1010,518'],
  [1, 'o', '1010,518 1060,527 1090,530'],
  [1, 'g', '1090,530 1165,522'],
  [1, 'o', '1165,522 1195,525 1240,550 1285,557'],
  [1, 'g', '1285,557 1330,550 1380,530 1420,517'],
  [1, 'o', '1435,518 1470,525 1500,540 1525,550'],
  [1, 'g', '1525,550 1560,546'],
  [2, 'o', '0,543 25,540 60,565 105,585'],
  [2, 'g', '125,585 145,580 175,550 200,540 290,533'],
  [2, 'o', '290,532 330,532 400,552'],
  [2, 'g', '400,552 440,543 465,530 493,525'],
];
const aoLine = AO.flatMap(([b, , s]) => scale(b, s));
const sigLine = SIG.flatMap(([b, , s]) => scale(b, s));
const AwesomeChart = () => (
  <Plot height={93}>
    <g transform="translate(-28,-846)">
      <Grid top={846} h={93} ys={[851, 868, 901, 918, 935]} />
      {Array.from({ length: LAST + 1 }, (_, i) => {
        const x = Math.floor(barX(i));
        const y = at(aoLine, x);
        const s = at(sigLine, x);
        const rising = at(aoLine, x + 1) < at(aoLine, x - 5);
        const c = y < 884 ? (rising ? '#0000e8' : '#ff00ff') : rising ? '#009090' : '#e80000';
        const beyond = Math.abs(s - 884) > Math.abs(y - 884);
        return (
          <g key={i}>
            {beyond && <rect x={x - 1} y={Math.min(y, s)} width={2} height={Math.abs(y - s)} fill={s < 884 ? '#ffc8c8' : '#b0f0b0'} />}
            <rect x={x - 2} y={Math.min(y, 884)} width={3} height={Math.abs(y - 884)} fill={c} />
          </g>
        );
      })}
      <line x1={28} x2={END} y1={884} y2={884} stroke="#0000e8" strokeWidth={2} />
      {AO.map(([b, c, s], i) => (
        <polyline key={i} points={join(scale(b, s))} fill="none" stroke={c === 'k' ? '#000030' : '#b000b0'} strokeWidth={4} strokeLinejoin="round" />
      ))}
      {SIG.map(([b, c, s], i) => (
        <polyline key={i} points={join(scale(b, s))} fill="none" stroke={c === 'g' ? '#66ff66' : '#ff9000'} strokeWidth={4} strokeLinejoin="round" />
      ))}
      <Marks list={[[0, '93,547 423,615 693,597 1035,502'], [1, '95,508 607,530 707,543 925,523 1435,518'], [2, '10,547 290,530']]} color="#f4f000" w={6} />
      <Marks list={[[0, '80,547 410,612 463,633 757,672 1565,543'], [1, '20,537 568,533 685,545 885,533 1308,552 1563,547'], [2, '122,582']]} up color="#00f0ff" w={6} />
    </g>
  </Plot>
);

/* ---------- "Barra Fuerza" ---------- */
const FORCE_BG: [number, string, string][] = [
  [0, 'p', '149,161 301,404 416,456 622,635 647,786 965,978 1093,1107'],
  [0, 'y', '186,238 1132,1568'],
  [0, 'g', '238,289 1196,1208 1220,1247 1272,1311 1426,1463 1502,1514'],
  [0, 'm', '289,301'],
  [1, 'y', '0,1174 1404,1416 1441,1468'],
  [1, 'g', '0,12 152,167 230,279 394,510 637,676 779,828 880,892 943,982 995,1058 1098,1122 1174,1213 1468,1480'],
  [1, 'm', '1213,1225 1416,1428 1480,1492'],
  [1, 'p', '1225,1289 1428,1441 1492,1519'],
  [2, 'p', '2,27 39,103 130,142'],
  [2, 'y', '230,500'],
  [2, 'g', '294,333 345,385'],
  [2, 'm', '385,397'],
  [2, 'p', '397,409'],
];
const FFILL: Record<string, string> = { p: '#6868c0', y: '#fffc88', g: '#40ff40', m: '#600000' };
const forceLine: P[] = [
  ...scale(0, '69,838 110,848 150,852 190,857 240,858 280,855 330,843 380,828 440,823 500,828 560,835 610,845 650,845 690,825 720,795 745,755 770,728 785,732 820,760 870,793 910,800 960,822 1010,835 1070,850 1150,855 1210,862 1300,858 1360,862 1430,868 1500,862 1550,862'),
  ...scale(1, '10,865 80,870 180,878 270,872 390,878 450,862 520,858 620,870 700,866 830,868 950,870 1060,866 1110,868 1170,870 1213,850 1285,835 1330,842 1410,856 1470,856 1510,848 1560,850'),
  ...scale(2, '0,852 60,838 100,826 140,832 200,850 290,862 330,856 390,852 420,855 500,868'),
];
const ForceChart = () => (
  <Plot height={56}>
    <g transform="translate(-28,-940)">
      <Grid top={940} h={56} ys={[946, 966]} />
      <rect x={28} y={940} width={1450} height={56} fill="#b0eeff" />
      {FORCE_BG.flatMap(([b, c, s]) => parse(s).map(([x0, x1], i) => {
        const l = Math.round(bx(b, x0));
        return <rect key={`${b}${c}${i}`} x={l} y={940} width={Math.round(bx(b, x1)) - l} height={56} fill={FFILL[c]} />;
      }))}
      <rect x={28} y={987} width={1450} height={9} fill="rgba(120,90,40,.22)" />
      {Array.from({ length: LAST + 1 }, (_, i) => {
        const x = Math.floor(barX(i));
        const y = Math.round(at(forceLine, x));
        const rising = at(forceLine, x + 2) < at(forceLine, x - 4);
        return (
          <g key={i}>
            <rect x={x - 3} y={y} width={6} height={996 - y} fill={rising ? 'rgba(0,0,190,.75)' : 'rgba(200,0,0,.6)'} />
            <rect x={x - 1} y={y + 2} width={2} height={994 - y} fill={rising ? '#2020ff' : '#ff4838'} opacity={0.6} />
          </g>
        );
      })}
      <line x1={28} x2={END} y1={986.5} y2={986.5} stroke="#000" />
    </g>
  </Plot>
);

/* ---------- axes ---------- */
type Mark = [number, string, string?];
const Scale = ({ top, h, plain, boxed, stack = [] }: { top: number; h: number; plain: Mark[]; boxed: Mark[]; stack?: number[] }) => (
  <Axis height={h} fontFamily={FONT} fontSize={10} fontWeight={700}>
    <g transform={`translate(0,${-top})`}>
      {plain.map(([y, t]) => (
        <g key={y}>
          <line x1={0} x2={4} y1={y + 0.5} y2={y + 0.5} stroke={C.line} />
          <text x={6} y={y + 3}>{t}</text>
        </g>
      ))}
      {stack.map((y) => <path key={y} d={`M4.500 ${y + 6}v-5.500h24v5.500`} fill="none" stroke={C.line} />)}
      {boxed.map(([y, t, c = '#000']) => (
        <g key={y}>
          <line x1={0} x2={4} y1={y + 0.5} y2={y + 0.5} stroke={c} strokeWidth={2} />
          <rect x={4.5} y={y - 6.5} width={Math.min(40, 4 + t.length * 5)} height={13} fill="#fff" stroke={C.line} />
          <text x={6} y={y + 3} fill={c} fontSize={9}>{t}</text>
        </g>
      ))}
    </g>
  </Axis>
);

const DATES: [number, string][] = [
  [42, '09'], [73, '16'], [99, '21'], [136, 'mar'], [177, '11'], [204, '17'], [230, '23'], [271, 'abr'], [313, '10'], [339, '16'], [360, '22'], [401, 'may'], [443, '11'], [469, '16'], [495, '22'], [537, 'jun'], [573, '09'], [599, '15'], [631, '22'], [672, 'jul'], [709, '09'], [735, '15'], [761, '21'], [787, '27'], [813, 'ago'], [844, '08'], [870, '14'], [896, '20'], [922, '26'], [949, 'sept'], [974, '07'], [1006, '14'], [1032, '19'], [1058, '25'], [1085, 'oct'], [1110, '07'], [1136, '13'], [1162, '19'], [1193, '26'], [1224, 'nov'], [1245, '06'], [1271, '12'], [1297, '18'], [1323, '24'], [1355, 'dic'], [1381, '07'], [1407, '12'], [1433, '18'], [1459, '25'], [1490, '2026'], [1511, '05'], [1542, '11'], [1573, '17'], [1605, '23'], [1652, 'feb'], [1698, '10'], [1730, '16'], [1761, '22'], [1797, 'mar'], [1824, '06'], [1855, '12'],
];
const TimeAxis = () => (
  <Plot height={13} fontFamily={FONT} fontSize={10} fontWeight={700} textAnchor="middle">
    <g transform="translate(-28,0)">
      {DATES.map(([x, t]) => (
        <g key={x}>
          <line x1={x + 0.5} x2={x + 0.5} y1={0} y2={3} stroke={C.line} />
          <text x={x} y={11}>{t}</text>
        </g>
      ))}
    </g>
  </Plot>
);

/* ---------- icons ---------- */
const Chevron = ({ up }: { up?: boolean }) => (
  <svg width={7} height={5} viewBox="0 0 7 5"><path d={up ? 'M1 4l2.500-2.500L6 4' : 'M1 1l2.500 2.500L6 1'} fill="none" stroke={up ? '#667f8c' : '#1c2d36'} strokeWidth={1.4} /></svg>
);
const plus = (x: number, y: number) => `M${x - 2} ${y}h4M${x} ${y - 2}v4`;
const Bell = () => (
  <>
    <path d="M4 14c3-2 2-9 7-10 5 1 4 8 7 10z" fill="#ffe800" stroke="#8a7a00" />
    <circle cx={11} cy={16} r={1.500} fill="#8a7a00" />
    <circle cx={11} cy={3.500} r={1} fill="#8a7a00" />
  </>
);
const Glass = ({ x = 0 }: { x?: number }) => (
  <g transform={`translate(${x},0)`}>
    <circle cx={9} cy={8} r={4.500} fill="#bcd6e4" stroke="#333" />
    <path d="M12 11l5 5" stroke="#222" strokeWidth={2.200} />
  </g>
);
const TOOLS: [string, React.ReactNode][] = [
  ['Puntero', <path d="M8 4v12l3-3 2 4 2-1-2-4h4z" fill="#eee" stroke="#555" />],
  ['Zoom', <Glass />],
  ['Zoom zona', <><path d="M2 7h6M2 7v9h12v-2" fill="none" stroke="#1060e0" strokeWidth={1.500} strokeDasharray="2 1" /><Glass x={2} /></>],
  ['Alerta en objeto', <><Bell /><path d="M2 4h16M14 2l5 5M19 2l-5 5" stroke="#1020a0" strokeWidth={1.300} /><path d="M15 8v8l2-2 2 3 1-1-1-3h2z" fill="#fff" stroke="#777" strokeWidth={0.500} /></>],
  ['Alerta', <><Bell /><path d="M3 4q-1 3 0 4M19 4q1 3 0 4" fill="none" stroke="#555" /></>],
  ['Fibonacci extensión', <><path d="M4 13l3-8 4 8h8" fill="none" stroke="#222" strokeWidth={1.300} /><path d="M10 9h10" stroke="#ff8040" strokeDasharray="2 1" /><path d={plus(3, 13) + plus(7, 4)} stroke="#1010e0" strokeWidth={1.300} /><path d="M17 18v-7h4M17 14h3" fill="none" stroke="#1010e0" strokeWidth={2} /></>],
  ['Fibonacci', <><path d="M3 8h14" stroke="#ff8040" strokeWidth={2} strokeDasharray="2 1" /><path d="M3 12h12" stroke="#1010e0" strokeDasharray="2 1" /><path d="M17 17v-7h4M17 13h3" fill="none" stroke="#1010e0" strokeWidth={2} /></>],
  ['Rectángulo azul', <><rect x={5} y={5} width={12} height={9} fill="#a8c4e0" stroke="#5a94ff" /><path d={plus(4, 14) + plus(17, 5)} stroke="#1010e0" strokeWidth={1.300} /></>],
  ['Rectángulo rojo', <><rect x={5} y={6} width={12} height={8} fill="#b0a4b0" stroke="#f02020" strokeWidth={1.500} /><path d={plus(4, 15) + plus(18, 5)} stroke="#1010e0" strokeWidth={1.300} /></>],
  ['Flecha', <><circle cx={6} cy={15} r={2} fill="none" stroke="#000" strokeWidth={1.300} /><path d="M8 13l7-6" stroke="#000" strokeWidth={2.500} /><path d="M11 4h8v8z" /></>],
  ['Texto', <><path d="M4 3h13v10l-3 3H4z" fill="#a4c4e4" stroke="#5a94ff" /><path d="M7 6h7M10.500 6v8" stroke="#000" strokeWidth={2} /></>],
  ['Comentario', <><path d="M11 3a7 6 0 1 0 0 13l4 3v-4a7 6 0 0 0-4-12z" fill="#a4c4e4" stroke="#5a94ff" /><path d="M7 7h7M10.500 7v7" stroke="#0a7a20" strokeWidth={2} /></>],
  ['Segmento', <><path d="M7 14l8-8" stroke="#000" /><circle cx={6} cy={15} r={2} fill="none" stroke="#000" /><circle cx={16} cy={5} r={2} fill="none" stroke="#000" /></>],
  ...['#7cf07c', '#30b030', '#108018', '#f01818'].map((c) => [`Línea ${c}`, <><path d="M9 10h12" stroke={c} strokeWidth={2} /><circle cx={8} cy={10} r={2} fill="none" stroke={c} strokeWidth={1.300} /></>] as [string, React.ReactNode]),
  ['Regla', <path d="M3 13L15 3l4 4L7 17zM7 10l2 2M10 7l2 2M13 5l2 2" fill="#b0c2cc" stroke="#5c6c74" />],
  ['Canal', <><rect x={3} y={3} width={16} height={14} fill="#a0b8b0" /><path d="M3 3h16" stroke="#30b030" strokeDasharray="2 1" /><path d="M3 17h16" stroke="#f03030" strokeDasharray="2 1" /><path d="M3 14l4-5 3 3 3-5 2 3 4-5" fill="none" stroke="#9090f0" strokeWidth={1.500} /></>],
  ...([['#f02020', '#b0a8b4'], ['#8a5a20', '#a0a898'], ['#188830', '#88b098'], ['#20f020', '#98ccb4']] as const).map(([c, f]) => [`Elipse ${c}`, <><ellipse cx={11} cy={10} rx={7} ry={5} fill={f} stroke={c} strokeWidth={1.300} /><path d={plus(3, 15) + plus(19, 4)} stroke="#1010e0" strokeWidth={1.300} /></>] as [string, React.ReactNode]),
  ...['#000', '#30a030', '#f01818'].map((c) => [`Recta ${c}`, <path d="M2 19L20 1" stroke={c} strokeWidth={c === '#000' ? 1 : 2} />] as [string, React.ReactNode]),
  ...['#000', '#f88878', '#10f010', '#108018', '#f01818', '#5a94ff', '#1010b0'].map((c) => [`Horizontal ${c}`, <path d={c === '#000' ? 'M2 9.500h18' : 'M2 10h18'} stroke={c} strokeWidth={c === '#000' ? 1 : 2} />] as [string, React.ReactNode]),
  ['Vertical', <path d="M11.500 1v18" stroke="#000" />],
  ['Ángulo', <><path d="M18 15H3L14 4" fill="none" stroke="#f05050" strokeWidth={1.200} /><path d="M9 8q3 2 3 6M8 10l1-3 3 1" fill="none" stroke="#1010e0" strokeWidth={1.500} /><circle cx={18} cy={7} r={2} fill="none" stroke="#1010e0" /></>],
  ['Círculo', <><circle cx={10} cy={11} r={6} fill="none" stroke="#ff9040" strokeWidth={1.500} /><path d={plus(10, 11) + plus(15, 6)} stroke="#1010e0" strokeWidth={1.300} /></>],
  ['Elliott impulso', <path d={'M3 4v6M2 14l3 4M8 5h3v4h-3M15 3h3M10 10l3-4M6 14l3-3M13 13l2-4' + plus(6, 12) + plus(13, 8) + plus(19, 4) + plus(16, 13) + plus(9, 17)} fill="none" stroke="#1010e0" />],
  ['Elliott corrección', <path d={'M3 13h3v4h-3zM16 3v4h3v-3h-3M14 14h-3v3h3M7 5l8 8M6 10l3-4' + plus(7, 10) + plus(12, 4) + plus(18, 16)} fill="none" stroke="#1010e0" />],
  ['Aceptar', <path d="M3 11l3-2 3 4 9-9 1 2-10 11z" fill="#50e050" stroke="#189028" />],
  ['Me gusta', <path d="M3 10h3v8H3zM7 10l4-3V3q3-2 3 5h5v3l-2 7H9l-2-1z" fill="#40d040" stroke="#189028" />],
  ['Eliminar', <path d="M5 3l6 4 6-4 2 3-4 4 4 5-2 3-6-4-6 4-2-3 4-5-4-4z" fill="#f01818" stroke="#a00000" strokeWidth={0.500} />],
];
const Ico = ({ children, w = 22 }: { children: React.ReactNode; w?: number }) => (
  <svg width={w} height={20} viewBox="0 0 22 20" fill="#000" aria-hidden="true">{children}</svg>
);
const Close = () => (
  <Plain type="button" aria-label="Cerrar">
    <svg width={11} height={11} viewBox="0 0 11 11"><circle cx={5.500} cy={5.500} r={5.200} fill="#3d648e" /><path d="M3.500 3.500l4 4M7.500 3.500l-4 4" stroke="#fff" strokeWidth={1.500} /></svg>
  </Plain>
);
const Swatch = ({ half }: { half?: boolean }) => (
  <svg width={8} height={8}><rect width={8} height={8} fill={C.line} />{half && <rect x={4} width={4} height={8} fill="#000" />}</svg>
);
const PanelTabs = ({ name, half }: { name: string; half?: boolean }) => (
  <Tabs>
    <Tab><Close /></Tab>
    <Tab><Swatch half={half} />{name}</Tab>
  </Tabs>
);
const MiniChart = ({ x, y }: { x: number; y: number }) => (
  <g transform={`translate(${x},${y})`}><rect width={11} height={9} fill="#fff" stroke="#2060c0" /><path d="M0 1h11" stroke="#2060c0" strokeWidth={2} /><path d="M1 7l3-3 2 2 4-3" fill="none" stroke="#20a020" /></g>
);

const PERIODS = ['12s', '144s', '1m', '12m', '56m', '1h', '4h', 'D', 'W', 'M', 'Q'];
const UNITS = ['5kU', '10kU', '35kU'];

const Toolbar = () => (
  <TopBar>
    <Group $pad={3}>
      <svg width={15} height={16} viewBox="0 0 15 16"><g fill="#3aa53a"><rect x={1} y={8} width={3} height={5} /><rect x={6} y={5} width={3} height={6} /><rect x={11} y={3} width={3} height={6} /></g><path d="M2.500 6v9M7.500 3v10M12.500 1v10" stroke="#2c7c2c" /></svg>
    </Group>
    <Group $pad={3}>
      <svg width={8} height={14} viewBox="0 0 8 14" fill="none" stroke="#5a707c"><rect x={0.500} y={1} width={2.500} height={4.500} rx={1} /><rect x={4.500} y={1} width={2.500} height={4.500} rx={1} /><rect x={0.500} y={8} width={2.500} height={4.500} rx={1} /><rect x={4.500} y={8} width={2.500} height={4.500} rx={1} /></svg>
    </Group>
    <Group $pad={4} $gap={3}>
      <Picker $w={34} aria-label="Valor"><option>SPTRD</option></Picker><Chevron />
    </Group>
    <Group $pad={3} $gap={4}>
      {PERIODS.map((p) => <Frame key={p} $on={p === 'D'} type="button">{p}</Frame>)}
    </Group>
    <Group $pad={4} $gap={4}>
      <Picker $w={24} aria-label="Periodo"><option>1 día</option></Picker><Chevron />
    </Group>
    <Group $pad={3} $gap={4}>
      {UNITS.map((u) => <Frame key={u} $on={u === '10kU'} type="button">{u}</Frame>)}
    </Group>
    <Group $pad={4} $gap={3}>
      <Picker $w={65} aria-label="Unidades"><option>10 k unidades</option></Picker><Chevron />
    </Group>
    <Group $pad={3}>
      <Plain type="button">
        <svg width={17} height={17} viewBox="0 0 17 17" fill="none"><path d="M1 4q4-4 8 1t7-2" stroke="#30a030" strokeWidth={1.500} /><path d="M1 8q4-6 8-1t7 2" stroke="#d04050" strokeWidth={1.500} /><rect x={1} y={11} width={15} height={5} fill="#10c020" /><path d="M3 16v-3h3v3M10 16v-3h3v3" fill="#d02020" /></svg>
        Indicadores
      </Plain>
    </Group>
    <Group $pad={3}><Plain type="button" aria-label="Más indicadores"><Chevron /></Plain></Group>
    <Group $pad={6} $gap={4} $open>
      <svg width={12} height={12}><rect x={1} y={1} width={10} height={10} fill="#e4e9ea" stroke="#9aa8ae" /><path d="M6 3v1M6 5v4" stroke="#8a969c" strokeWidth={2} /></svg>
      <svg width={14} height={8}><circle cx={8} cy={4} r={3} fill="#3c9c10" /></svg>
      <Change>-0,19 %</Change>
      <Clock>12:23:34</Clock>
      <Market>EEUU 500 Cash (1€)</Market>
    </Group>
    <Spacer />
    <Group $pad={0} $gap={0}>{null}</Group>
    <Group $pad={2}>
      <Plain type="button" aria-label="Sincronizar">
        <svg width={16} height={16} viewBox="0 0 16 16" fill="none" strokeWidth={2.200}><path d="M9 2q-5 0-5 6" stroke="#f05050" /><path d="M0 7h8l-4 5z" fill="#f05050" /><path d="M7 14q6 0 5-6" stroke="#20c030" /><path d="M16 9H8l4-5z" fill="#20c030" /></svg>
      </Plain>
    </Group>
    <Group $pad={4} $gap={5} $open>
      <Plain type="button" aria-label="Minimizar"><svg width={9} height={9}><path d="M0 8h8" stroke="#7a929c" strokeWidth={2} /></svg></Plain>
      <Plain type="button" aria-label="Restaurar"><svg width={9} height={9} fill="none" stroke="#7a929c"><path d="M2.500 3V.500h6v5H6" /><rect x={0.500} y={3.500} width={5} height={4} /></svg></Plain>
      <Plain type="button" aria-label="Cerrar ventana"><svg width={9} height={9}><path d="M1 1l7 7M8 1L1 8" stroke="#7a929c" strokeWidth={2} /></svg></Plain>
    </Group>
  </TopBar>
);

const Sidebar = () => (
  <Side>
    <Fold type="button" aria-label="Subir"><Chevron up /></Fold>
    {TOOLS.map(([n, icon], i) => (
      <Tool key={n} $on={i === 0} type="button" aria-label={n}><Ico>{icon}</Ico></Tool>
    ))}
    <Peek><Ico><path d="M7 7q4-6 8 0z" fill="#ffa020" /></Ico></Peek>
    <Fold type="button" aria-label="Bajar"><Chevron /></Fold>
    <Tool type="button" aria-label="Opciones de objeto">
      <Ico><path d="M8 5h9v12H8z" fill="#eee" stroke="#888" /><path d="M10 14l3-4 2 3" fill="none" stroke="#888" /><circle cx={6} cy={5} r={4} fill="#108018" /><path d="M5 4l1.500-1v5" fill="none" stroke="#fff" /><path d="M12 17l5-5" stroke="#555" strokeWidth={2} /><path d="M16 17h5l-2.500 3z" /></Ico>
    </Tool>
    <Spacer />
    <Tool type="button" aria-label="Más"><Ico><circle cx={5} cy={8} r={1.500} fill="#333" /><circle cx={10} cy={8} r={1.500} fill="#333" /><circle cx={15} cy={8} r={1.500} fill="#333" /><path d="M13 13h5l-2.500 3z" /></Ico></Tool>
  </Side>
);

const BottomBar = () => (
  <Bottom>
    <Shelf $dark>
      <Plain type="button" aria-label="Dibujar"><Ico><path d="M3 4l5 12M6 16l5-11M3 17h14" stroke="#a02020" fill="none" /><path d="M10 16l8-12 2 2-7 11z" fill="#ffd020" stroke="#806000" /></Ico></Plain>
    </Shelf>
    <Shelf>
      <Plain type="button" aria-label="Compartir"><Ico w={18}><path d="M5 10l11-6M5 10l11 6" stroke="#eee" strokeWidth={2} /><circle cx={5} cy={10} r={3} fill="#fff" /><circle cx={16} cy={4} r={3} fill="#fff" /><circle cx={16} cy={15} r={3} fill="#fff" /><path d="M16 16h6l-3 3z" /></Ico></Plain>
      <Plain type="button" aria-label="Mensajes"><Ico w={18}><path d="M3 3h10v9H3z" fill="#dce8f4" stroke="#5088c8" /><path d="M7 7h12v8h-6l-3 3v-3H7z" fill="#3878d8" /><path d="M10 11h7" stroke="#fff" strokeWidth={2} strokeDasharray="1 2" /></Ico></Plain>
      <Plain type="button" aria-label="Informe"><Ico w={18}><rect x={5} y={2} width={13} height={15} fill="#f0f0f0" stroke="#666" /><path d="M7 5h8M7 8h4" stroke="#222" strokeWidth={1.500} /><path d="M7 14l4-5 5 2" stroke="#e02020" fill="none" strokeWidth={2} /><rect x={7} y={12} width={9} height={3} fill="#30a040" /></Ico></Plain>
      <Plain type="button" aria-label="Órdenes"><Ico w={18}><path d="M10 2v16" stroke="#222" /><path d="M3 4h8v3H3zM5 9h6v3H5zM3 14h8v3H3z" fill="#20b030" /><path d="M11 4h7v3h-7zM11 9h8v3h-8zM11 14h5v3h-5z" fill="#d03030" /></Ico></Plain>
      <Plain type="button" aria-label="Ventanas"><Ico w={18}><MiniChart x={2} y={2} /><MiniChart x={9} y={9} /></Ico></Plain>
    </Shelf>
    <Plain type="button" aria-label="Plegar"><svg width={8} height={8} fill="none" stroke="#33444c"><path d="M4 1L1 4l3 3M7.500 1l-3 3 3 3" /></svg></Plain>
    <Scroll>
      <Step type="button" aria-label="Atrás"><svg width={6} height={8}><path d="M4 1L2 4l2 3" fill="none" stroke="#000" strokeWidth={1.500} /></svg></Step>
      <Track><Thumb /></Track>
      <Step type="button" aria-label="Adelante"><svg width={6} height={8}><path d="M2 1l2 3-2 3" fill="none" stroke="#000" strokeWidth={1.500} /></svg></Step>
    </Scroll>
    <ZoomShelf>
      <Plain type="button" aria-label="Deshacer"><Ico w={18}><path d="M7 7h6q5 1 3 8" fill="none" stroke="#6a9cd0" strokeWidth={2.500} /><path d="M9 2v10L3 7z" fill="#6a9cd0" /></Ico></Plain>
      <Plain type="button" aria-label="Rehacer"><Ico w={18}><path d="M15 7H9q-5 1-3 8" fill="none" stroke="#7aacd0" strokeWidth={2.500} /><path d="M13 2v10l6-5z" fill="#7aacd0" /></Ico></Plain>
      <Plain type="button" aria-label="Ajustes"><Ico w={18}><rect x={2} y={10} width={8} height={8} fill="#e02020" /><rect x={12} y={1} width={8} height={16} fill="#20c030" stroke="#108018" /><path d="M6 15l8-8" stroke="#333" strokeWidth={5} /><path d="M6 15l8-8M12 4q0 5 5 4" stroke="#fff" strokeWidth={3} fill="none" /></Ico></Plain>
      <Plain type="button" aria-label="Escala"><Ico w={18}><circle cx={8} cy={7} r={5.500} fill="#dde6ea" stroke="#333" /><path d="M12 11l5 6" stroke="#222" strokeWidth={2.500} /><path d="M20 3v11M18 5l2-3 2 3M18 12l2 3 2-3M1 17h11M3 15l-2 2 2 2" stroke="#1030e0" fill="none" strokeWidth={1.500} /></Ico></Plain>
      <Plain type="button" aria-label="Alejar"><Ico w={18}><circle cx={9} cy={8} r={5.500} fill="#fff" stroke="#333" /><path d="M13 12l6 6" stroke="#222" strokeWidth={2.500} /><path d="M6 8h6" stroke="#1030e0" strokeWidth={2} /></Ico></Plain>
      <Plain type="button" aria-label="Acercar"><Ico w={18}><circle cx={9} cy={8} r={5.500} fill="#fff" stroke="#333" /><path d="M13 12l6 6" stroke="#222" strokeWidth={2.500} /><path d="M6 8h6M9 5v6" stroke="#1030e0" strokeWidth={2} /></Ico></Plain>
      <svg width={12} height={18}><path d="M1 3h11M1 6h11" stroke="#333" strokeWidth={2} strokeDasharray="3 1" /><path d="M8 8v5M6 12h4l-2 3z" stroke="#1060d0" fill="#1060d0" strokeWidth={2} /></svg>
    </ZoomShelf>
  </Bottom>
);

export default function App() {
  return (
    <Page>
      <GlobalStyle />
      <Toolbar />
      <Body>
        <Sidebar />
        <Charts>
          <PanelRow>
            <PriceChart />
            <Scale top={23} h={687}
              plain={[[29, '7.200'], [84, '7.000'], [140, ''], [196, '6.600'], [252, '6.400'], [307, '6.200'], [363, '6.000'], [419, '5.800'], [475, '5.600'], [530, '5.400'], [586, '5.200'], [642, '5.000'], [698, '4.800']]}
              boxed={[[111, '6.895,24', '#009900'], [122, '6.871,22', '#aa0000'], [136, '6.815,43', '#000099']]} />
            <Heading>D<br />EEUU 500 Cash (1€)</Heading>
            <Tabs>
              <Tab $tight>
                <svg width={12} height={12}><path d="M1 1h7l3 3v7H1z" fill="#fff" stroke="#a0b0b8" /><path d="M5 3h2v3h2L6 10 3 6h2z" fill="#e02020" /></svg>
                <svg width={12} height={12}><path d="M1 1h7l3 3v7H1z" fill="#fff" stroke="#a0b0b8" /><path d="M5 10h2V6h2L6 2 3 6h2z" fill="#18a028" /></svg>
                <Close />
              </Tab>
              <Tab $tight><TickLabel><Tick type="checkbox" />Precio</TickLabel></Tab>
              <Tab $tight><svg width={11} height={9}><path d="M3 1h8M3 4h8M3 7h8" stroke="#222" /><path d="M0 1h2M0 4h2M0 7h2" stroke="#222" strokeWidth={2} /></svg></Tab>
              <Tab $tight><TickLabel><Tick type="checkbox" />Cierre (W)</TickLabel></Tab>
              <Tab $tight><Swatch />Tunel Domenec v4 (t t t t t)</Tab>
              <Tab $tight><svg width={8} height={8}><rect width={8} height={8} fill="#111" /><path d="M1.500 0v8" stroke="#e02020" /><path d="M3.500 0v8" stroke="#20c020" /><path d="M5.500 0v8" stroke="#e8e020" /><path d="M7.500 0v8" stroke="#e02020" /></svg>Control Total Doc v.6</Tab>
            </Tabs>
          </PanelRow>
          <PanelRow>
            <TrainChart />
            <Scale top={711} h={78} plain={[]} stack={[712, 714, 716]} boxed={[[724, '89,470', '#ff0000'], [735, '80'], [751, '50', '#000099'], [771, '20'], [782, '0']]} />
            <PanelTabs name="Sistema de trenes Doc v4 (f f)" half />
          </PanelRow>
          <PanelRow>
            <WillyChart />
            <Scale top={790} h={55} plain={[]} boxed={[[797, '-6.8875', '#00c000'], [806, '-25', '#000099'], [818, '-50', '#000099'], [829, '-75', '#d00000'], [838, '-100']]} />
            <PanelTabs name="Willy Doc (t)" />
          </PanelRow>
          <PanelRow>
            <AwesomeChart />
            <Scale top={846} h={93} plain={[[851, '400'], [901, '-200'], [918, '-400'], [934, '-600']]} boxed={[[868, '100,07', '#30e030'], [877, '92,887', '#ff00ff'], [890, '0', '#ff00ff']]} />
            <PanelTabs name="Awesome Evolution Doc" />
          </PanelRow>
          <PanelRow>
            <ForceChart />
            <Scale top={940} h={56} plain={[[945, '1,5'], [966, '1']]} boxed={[[980, '0.5000'], [989, '0,3782', '#ff0000']]} />
            <PanelTabs name="Barra Fuerza Fondo Mercado v4 (f)" half />
          </PanelRow>
          <TimeAxis />
        </Charts>
      </Body>
      <BottomBar />
    </Page>
  );
}
